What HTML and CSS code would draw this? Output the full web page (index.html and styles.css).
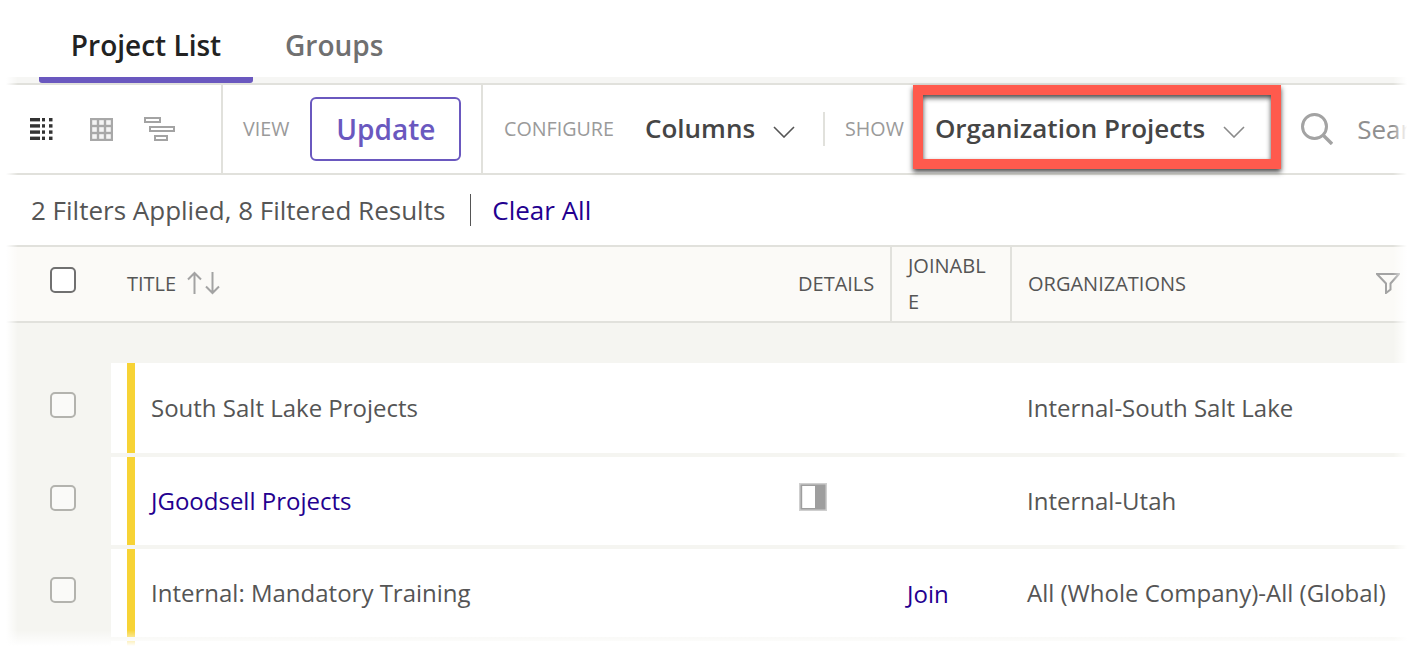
FILE: index.html
```html
<!DOCTYPE html>
<html lang="en">
<head>
<meta charset="utf-8">
<title>Project List</title>
<link rel="stylesheet" href="styles.css">
</head>
<body>
<div class="page">
  <nav class="tabs">
    <a class="tab tab-active">Project List</a>
    <a class="tab">Groups</a>
  </nav>
  <div class="toolbar">
    <div class="view-icons">
      <svg class="ic-list" width="24" height="24" viewBox="0 0 24 24"><g fill="#333"><rect x="0" y="1" width="10" height="3.4"/><rect x="0" y="7.2" width="10" height="3.4"/><rect x="0" y="13.4" width="10" height="3.4"/><rect x="0" y="19.6" width="10" height="3.4"/><rect x="12" y="1" width="3" height="3.4"/><rect x="12" y="7.2" width="3" height="3.4"/><rect x="12" y="13.4" width="3" height="3.4"/><rect x="12" y="19.6" width="3" height="3.4"/><rect x="19" y="1" width="3.5" height="3.4"/><rect x="19" y="7.2" width="3.5" height="3.4"/><rect x="19" y="13.4" width="3.5" height="3.4"/><rect x="19" y="19.6" width="3.5" height="3.4"/></g></svg>
      <svg class="ic-grid" width="23" height="23" viewBox="0 0 23 23"><rect width="23" height="23" fill="#a8a8a8"/><g fill="#f4f4f4"><rect x="2.200" y="2.200" width="4.600" height="4.600"/><rect x="9.200" y="2.200" width="4.600" height="4.600"/><rect x="16.200" y="2.200" width="4.600" height="4.600"/><rect x="2.200" y="9.200" width="4.600" height="4.600"/><rect x="9.200" y="9.200" width="4.600" height="4.600"/><rect x="16.200" y="9.200" width="4.600" height="4.600"/><rect x="2.200" y="16.200" width="4.600" height="4.600"/><rect x="9.200" y="16.200" width="4.600" height="4.600"/><rect x="16.200" y="16.200" width="4.600" height="4.600"/></g></svg>
      <svg class="ic-gantt" width="32" height="25" viewBox="0 0 32 25"><g fill="none" stroke="#a3a3a3" stroke-width="2"><rect x="1" y="1" width="15" height="4"/><rect x="6" y="10" width="24" height="4"/><rect x="11" y="19" width="12" height="4"/></g></svg>
    </div>
    <div class="view-group">
      <span class="label">VIEW</span>
      <button class="btn-update">Update</button>
    </div>
    <div class="config-group">
      <span class="label">CONFIGURE</span>
      <span class="dropdown dd-columns">Columns
        <svg class="chev" width="22" height="12" viewBox="0 0 22 12"><path d="M1 1l10 10L21 1" fill="none" stroke="#555" stroke-width="1.6"/></svg>
      </span>
      <span class="vsep"></span>
      <span class="label">SHOW</span>
      <span class="dropdown dd-show">Organization Projects
        <svg class="chev" width="22" height="12" viewBox="0 0 22 12"><path d="M1 1l10 10L21 1" fill="none" stroke="#8a8a8a" stroke-width="1.6"/></svg>
      </span>
      <svg class="ic-search" width="32" height="32" viewBox="0 0 32 32"><circle cx="13.500" cy="13.500" r="12" fill="none" stroke="#a3a3a3" stroke-width="3"/><path d="M22 22l9 9" stroke="#a3a3a3" stroke-width="3.4" fill="none"/></svg>
      <span class="search-text">Search</span>
    </div>
  </div>
  <div class="filters">
    <span>2 Filters Applied, 8 Filtered Results</span>
    <span class="filters-sep"></span>
    <a class="link">Clear All</a>
  </div>
  <div class="thead">
    <div class="th-check"><span class="checkbox checkbox-head"></span></div>
    <div class="th-title">TITLE
      <svg class="ic-sort" width="34" height="24" viewBox="0 0 34 24"><path d="M7.500 23V2M1 8.500L7.500 2L14 8.500M25.500 1v21M19 15.500L25.500 22L32 15.500" fill="none" stroke="#a3a3a3" stroke-width="2"/></svg>
    </div>
    <div class="th-details">DETAILS</div>
    <div class="th-join">JOINABLE</div>
    <div class="th-org">ORGANIZATIONS
      <svg class="ic-filter" width="24" height="21" viewBox="0 0 24 21"><path d="M1 1h22l-8.500 9.500v6L10 20v-9.500z" fill="none" stroke="#a3a3a3" stroke-width="2"/></svg>
    </div>
  </div>
  <div class="tbody">
    <div class="row row-first">
      <div class="td-check"><span class="checkbox"></span></div>
      <div class="card">
        <div class="td-title">South Salt Lake Projects</div>
        <div class="td-details"></div>
        <div class="td-join"></div>
        <div class="td-org">Internal-South Salt Lake</div>
      </div>
    </div>
    <div class="row">
      <div class="td-check"><span class="checkbox"></span></div>
      <div class="card">
        <div class="td-title"><a class="link">JGoodsell Projects</a></div>
        <div class="td-details">
          <svg class="ic-panel" width="28" height="28" viewBox="0 0 28 28"><rect width="28" height="28" fill="#cfcfcf"/><rect x="1.500" y="1.500" width="25" height="25" fill="#9e9e9e"/><rect x="3.200" y="3" width="12.800" height="22" fill="#fff"/></svg>
        </div>
        <div class="td-join"></div>
        <div class="td-org">Internal-Utah</div>
      </div>
    </div>
    <div class="row">
      <div class="td-check"><span class="checkbox"></span></div>
      <div class="card">
        <div class="td-title">Internal: Mandatory Training</div>
        <div class="td-details"></div>
        <div class="td-join"><a class="link">Join</a></div>
        <div class="td-org">All (Whole Company)-All (Global)</div>
      </div>
    </div>
    <div class="row row-stub">
      <div class="td-check"></div>
      <div class="card"></div>
    </div>
  </div>
  <div class="highlight"></div>
  <div class="fade"></div>
</div>
</body>
</html>
```
FILE: styles.css
```css
* { box-sizing: border-box; }
html, body { margin: 0; padding: 0; background: #fff; }
body { font-family: "Open Sans", "Noto Sans", sans-serif; color: #4a4a4a; }
.page { position: relative; width: 1411px; height: 651px; overflow: hidden; background: #fff; }

.tabs { display: flex; height: 83px; padding-left: 39px; background: linear-gradient(#fff 77px, #f6f6f4 77px); }
.tab { width: 214px; text-align: center; font-size: 28px; font-weight: 600; line-height: 36px; padding-top: 27px; color: #707070; }
.tab-active { color: #222; border-bottom: 6px solid #6a58bf; border-radius: 3px; height: 83px; }
.tab:not(.tab-active) { width: auto; margin-left: 32px; }

.toolbar { display: flex; height: 92px; border-top: 2px solid #e1e1dc; border-bottom: 2px solid #e1e1dc; align-items: stretch; }
.view-icons { flex: none; width: 223px; border-right: 2px solid #e1e1dc; display: flex; align-items: center; padding-left: 30px; }
.ic-grid { margin-left: 36px; }
.ic-gantt { margin-left: 31px; }
.view-group { flex: none; width: 260px; border-right: 2px solid #e1e1dc; display: flex; align-items: center; padding-left: 20px; }
.label { font-size: 19.700px; color: #9a9a9a; line-height: 26px; }
.btn-update { margin-left: 21px; width: 151px; height: 64px; border: 2px solid #6a58bf; border-radius: 6px; background: #fff; color: #6a58bf; font: 600 28px "Open Sans", sans-serif; padding: 0; }
.config-group { flex: none; display: flex; align-items: center; padding-left: 21px; white-space: nowrap; }
.dropdown { font-size: 26px; font-weight: 600; color: #454545; display: flex; align-items: center; padding-bottom: 2px; }
.dd-columns { margin-left: 31px; }
.dd-show { margin-left: 31px; }
.chev { margin-left: 18px; margin-top: 8px; }
.vsep { width: 2px; height: 34px; background: #e1e1dc; margin: 0 20px 0 28px; }
.ic-search { margin-left: 56px; }
.search-text { margin-left: 24px; font-size: 26px; color: #8f8f8f; }

.filters { height: 70px; display: flex; align-items: center; padding-left: 31px; font-size: 26px; color: #555; }
.filters-sep { width: 1px; height: 32px; background: #555; margin: 0 21px 0 25px; }
.link { color: #23008f; }

.thead { display: flex; height: 78px; background: #fbfaf7; border-top: 2px solid #e1e1dc; border-bottom: 2px solid #e1e1dc; font-size: 20px; color: #555; align-items: stretch; }
.th-check { width: 127px; padding-left: 50px; display: flex; align-items: center; padding-bottom: 9px; }
.th-title { width: 671px; display: flex; align-items: center; padding-bottom: 2px; }
.ic-sort { margin-left: 11px; }
.th-details { width: 94px; display: flex; align-items: center; border-right: 2px solid #e1e1dc; padding-bottom: 2px; }
.th-join { width: 120px; padding: 0 20px 0 16px; border-right: 2px solid #e1e1dc; line-height: 36px; word-break: break-all; display: flex; align-items: center; }
.th-org { flex: 1; padding-left: 16px; display: flex; align-items: center; padding-bottom: 2px; white-space: nowrap; }
.ic-filter { margin-left: 190px; flex: none; }

.checkbox { display: block; width: 26px; height: 26px; border: 2px solid #b3b3ae; border-radius: 5px; background: #fafaf8; }
.checkbox-head { border-color: #707070; background: #fff; }

.tbody { background: #f5f5f1; height: 328px; padding-top: 40px; }
.row { display: flex; height: 92px; }
.row-first { height: 94px; }
.row-first .td-check { padding-top: 29px; }
.row-stub { height: 20px; }
.td-check { width: 111px; padding-left: 50px; padding-top: 28px; flex: none; }
.card { flex: 1; display: flex; align-items: center; background: #fff; margin-bottom: 4px; padding-bottom: 2px; font-size: 24px; color: #555; background-image: linear-gradient(#f7d335, #f7d335); background-repeat: no-repeat; background-position: 16px 0; background-size: 8px 100%; }
.td-title { width: 687px; padding-left: 40px; }
.td-details { width: 109px; padding-bottom: 6px; padding-left: 1px; }
.td-join { width: 120px; padding-top: 2px; }
.td-org { flex: 1; white-space: nowrap; }
.ic-panel { display: block; }

.highlight { position: absolute; left: 913px; top: 85px; width: 368px; height: 84px; border: 10px solid #ff5a4d; box-shadow: 0 3px 5px rgba(30,30,30,.8), inset 0 3px 5px rgba(30,30,30,.8); }
.fade { position: absolute; inset: 0; pointer-events: none; background:
  linear-gradient(to right, #fff 6px, rgba(255,255,255,0) 18px),
  linear-gradient(to left, #fff 4px, rgba(255,255,255,0) 18px),
  linear-gradient(to top, #fff 5px, rgba(255,255,255,0) 21px); }
```
